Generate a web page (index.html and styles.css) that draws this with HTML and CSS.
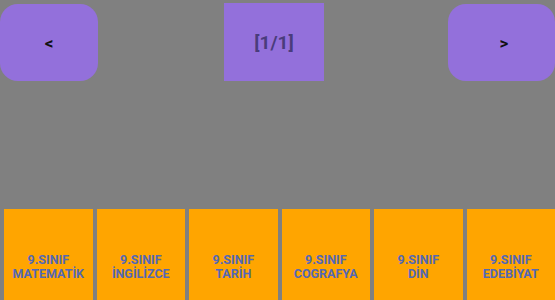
FILE: index.html
```html
<!DOCTYPE html>
<html lang="tr">

<head>
    <meta charset="UTF-8">
    <meta name="viewport" content="width=device-width, initial-scale=1.0">
    <title>Dersler</title>
    <link rel="stylesheet" href="styles.css">
</head>

<body>
    <!-- üst bar: sayfa butonları -->
    <div class="topbar">
        <button class="nav">&lt;</button>
        <div class="page">[1/1]</div>
        <button class="nav nav-right">&gt;</button>
    </div>

    <!-- alt bar: dersler -->
    <div class="lessons">
        <button class="lesson">9.SINIF<br>MATEMATİK</button>
        <button class="lesson">9.SINIF<br>İNGİLİZCE</button>
        <button class="lesson">9.SINIF<br>TARİH</button>
        <button class="lesson">9.SINIF<br>COGRAFYA</button>
        <button class="lesson">9.SINIF<br>DİN</button>
        <button class="lesson">9.SINIF<br>EDEBİYAT</button>
    </div>
</body>

</html>
```

FILE: styles.css
```css
html,
body {
    margin: 0;
    height: 100%;
    overflow: hidden;
}

body {
    background-color: #808080;
    font-family: Roboto, "Liberation Sans", sans-serif;
    display: flex;
    flex-direction: column;
    justify-content: space-between;
    height: 325px;
}

button {
    border: none;
    font-family: inherit;
    cursor: pointer;
    padding: 0;
}

.topbar {
    display: flex;
    justify-content: space-between;
    align-items: flex-end;
    padding-top: 3px;
}

.nav {
    width: 98px;
    height: 77px;
    background-color: #9370db;
    border-radius: 18px;
    font-size: 17px;
    font-weight: bold;
    color: #111;
}

.nav-right {
    width: 107px;
    padding-left: 5px;
}

.page {
    width: 100px;
    height: 78px;
    margin-left: 2px;
    background-color: #9370db;
    color: #4a3c7c;
    font-size: 19px;
    font-weight: bold;
    display: flex;
    align-items: center;
    justify-content: center;
}

.lessons {
    display: flex;
    gap: 4px;
    padding-left: 4px;
}

.lesson {
    flex: 1;
    height: 116px;
    background-color: #ffa500;
    color: #5468b5;
    font-size: 12.5px;
    font-weight: bold;
    line-height: 14px;
}
```
